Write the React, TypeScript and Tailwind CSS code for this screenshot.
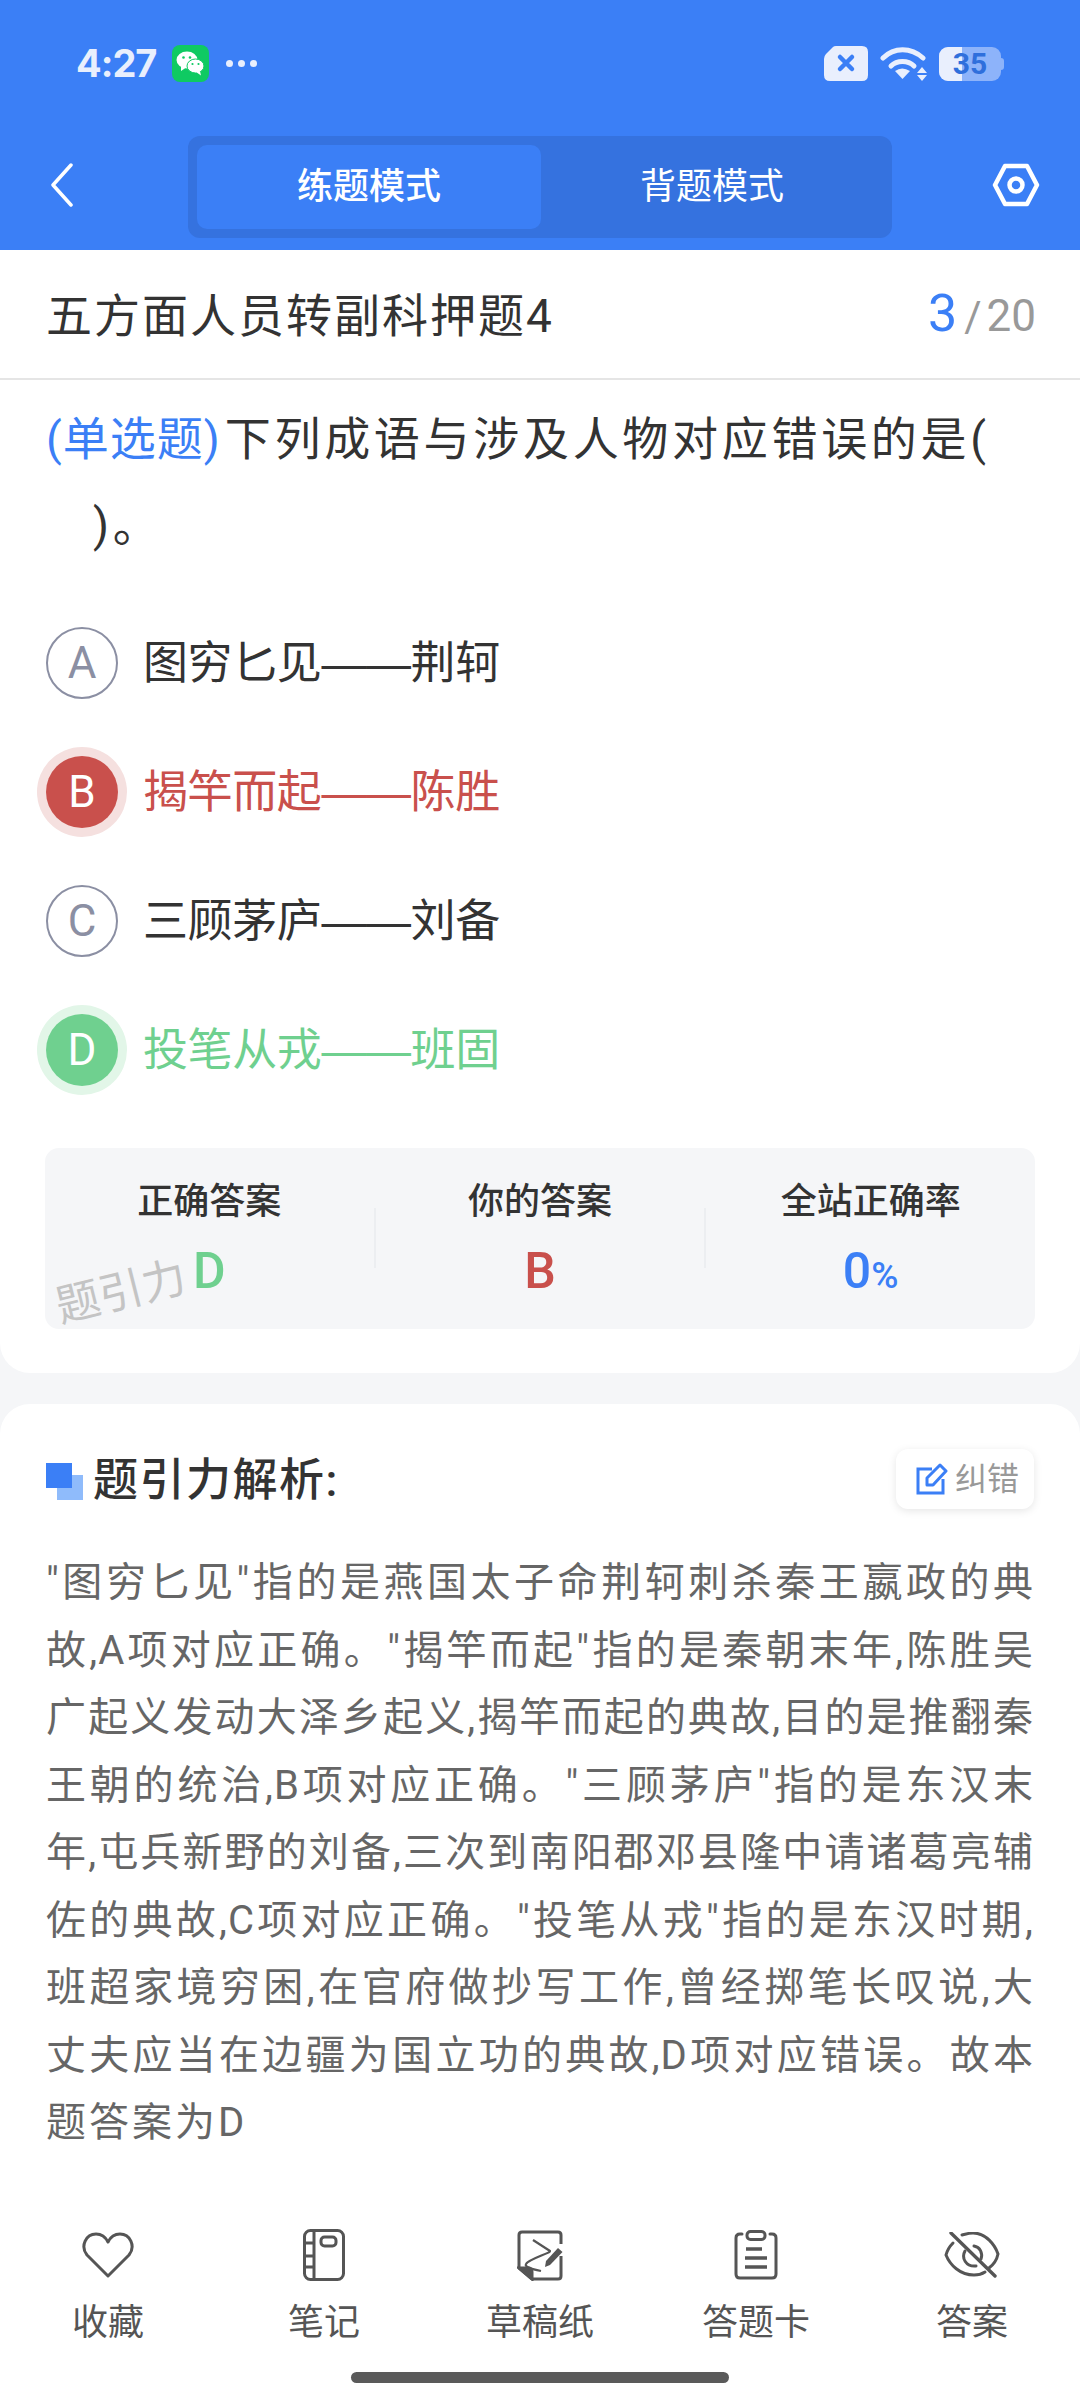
import React from "react";

const CJK = "font-['Roboto','Noto_Sans_CJK_SC',sans-serif]";

function Heart() {
  return (
    <svg width="52" height="46" viewBox="0 0 52 46" fill="none" stroke="#555" strokeWidth="3" strokeLinejoin="round">
      <path d="M26 44 L5 23 C-2 14 4 2 14 2 C20 2 24 6 26 10 C28 6 32 2 38 2 C48 2 54 14 47 23 Z" />
    </svg>
  );
}
function Notebook() {
  return (
    <svg width="42" height="52" viewBox="0 0 42 52" fill="none" stroke="#555" strokeWidth="3">
      <rect x="1.500" y="1.500" width="39" height="49" rx="6" />
      <path d="M11 2 V50" />
      <path d="M2 14 H11 M2 27 H11 M2 38 H11" />
      <rect x="18" y="8" width="15" height="9" rx="3.500" />
    </svg>
  );
}
function Draft() {
  return (
    <svg width="46" height="51" viewBox="0 0 46 51" fill="none" stroke="#555" strokeWidth="3">
      <path d="M44 14 V5 Q44 2 41 2 H5 Q2 2 2 5 V38 L15 49 H41 Q44 49 44 46 V26" strokeLinejoin="round" />
      <path d="M2 38 H11 Q15 38 15 42 V49 Z" fill="#555" />
      <path d="M16 10 L33 21 C34 23 12 29 9 34 C7 37 15 39 24 41" strokeWidth="2.200" strokeLinejoin="round" />
      <path d="M41 18 L45.500 22 L33 35 L28 37 L29 31 Z" fill="#555" stroke="none" />
    </svg>
  );
}
function Clipboard() {
  return (
    <svg width="44" height="50" viewBox="0 0 44 50" fill="none" stroke="#555" strokeWidth="3">
      <path d="M8 4 H6 Q2 4 2 8 V44 Q2 48 6 48 H38 Q42 48 42 44 V8 Q42 4 38 4 H36" strokeLinecap="round" />
      <rect x="13" y="1.500" width="18" height="8" rx="3.500" />
      <path d="M12 19 H28 M11 28 H33 M11 37 H33" strokeWidth="3.400" />
    </svg>
  );
}
function EyeOff() {
  return (
    <svg width="56" height="46" viewBox="0 0 56 46" fill="none" stroke="#555" strokeWidth="3" strokeLinecap="round">
      <path d="M9 11 C6 14 3 19 2 23 C6 33 16 43 30 43 C34 43 38 42 41 40" />
      <path d="M18 3 C22 2 25 1 29 1 C42 1 51 13 54 22 C53 27 49 33 45 36" />
      <path d="M21 19 C17 26 22 35 32 34" />
      <path d="M30 14 C36 15 39 21 37 27" />
      <path d="M7 1 L51 44" strokeWidth="3.400" />
    </svg>
  );
}

function Option({ letter, text, state }: { letter: string; text: string; state?: "wrong" | "right" }) {
  const circle =
    state === "wrong"
      ? "bg-[#c9504c] text-white border-0 shadow-[0_0_0_9px_#f5e0df]"
      : state === "right"
        ? "bg-[#6fd08f] text-white border-0 shadow-[0_0_0_9px_#e2f6e8]"
        : "border-2 border-[#8b8fa3] text-[#8b8fa3]";
  const color = state === "wrong" ? "text-[#c9504c]" : state === "right" ? "text-[#6fd08f]" : "text-[#333333]";
  return (
    <div className="flex h-[129px] items-center">
      <div className={`flex h-[72px] w-[72px] shrink-0 items-center justify-center rounded-full text-[44px] ${circle}`}>{letter}</div>
      <div className={`ml-[25px] pt-[3px] font-['Liberation_Sans','Noto_Sans_CJK_SC',sans-serif] text-[45px] tracking-[-0.4px] ${color}`}>{text}</div>
    </div>
  );
}

function Stat({ label, value, color, unit }: { label: string; value: string; color: string; unit?: string }) {
  return (
    <div className="flex flex-1 flex-col items-center pt-[32px]">
      <div className="text-[36px] font-medium leading-[44px] text-[#333333]">{label}</div>
      <div className={`mt-[21px] text-[50px] font-medium leading-[52px] ${color}`}>
        {value}
        {unit ? <span className="text-[37px]">{unit}</span> : null}
      </div>
    </div>
  );
}

function Tool({ icon, label }: { icon: React.ReactNode; label: string }) {
  return (
    <div className="flex flex-col items-center">
      <div className="flex h-[54px] items-center">{icon}</div>
      <div className="mt-[18px] text-[36px] leading-[46px] text-[#555555]">{label}</div>
    </div>
  );
}

const analysis = [
  '"图穷匕见"指的是燕国太子命荆轲刺杀秦王嬴政的典',
  '故,A项对应正确。"揭竿而起"指的是秦朝末年,陈胜吴',
  '广起义发动大泽乡起义,揭竿而起的典故,目的是推翻秦',
  '王朝的统治,B项对应正确。"三顾茅庐"指的是东汉末',
  '年,屯兵新野的刘备,三次到南阳郡邓县隆中请诸葛亮辅',
  '佐的典故,C项对应正确。"投笔从戎"指的是东汉时期,',
  '班超家境穷困,在官府做抄写工作,曾经掷笔长叹说,大',
  '丈夫应当在边疆为国立功的典故,D项对应错误。故本',
];

export default function App() {
  return (
    <div className={`relative flex h-[2400px] w-[1080px] flex-col overflow-hidden bg-[#f5f6f8] ${CJK}`}>
      <header className="h-[250px] shrink-0 bg-[#3b7ff6]">
        <div className="flex h-[125px] items-start justify-between pl-[76px] pr-[76px] pt-[42px]">
          <div className="flex items-center">
            <span className="font-['Inter',sans-serif] text-[38px] font-bold leading-[42px] tracking-[-1px] text-[#e9effd]">4:27</span>
            <div className="ml-[16px] flex h-[37px] w-[37px] items-center justify-center rounded-[8px] bg-[#0fca62]">
              <svg width="29" height="25" viewBox="0 0 29 25" fill="#ffffff">
                <ellipse cx="11" cy="9" rx="10.500" ry="8.500" />
                <path d="M5 14 L5 20 L11 16 Z" />
                <ellipse cx="19.500" cy="15" rx="8.500" ry="7" stroke="#0fca62" strokeWidth="1" />
                <path d="M24 20 L25 24.500 L20 21 Z" />
                <circle cx="7.500" cy="6.500" r="1.300" fill="#0fca62" />
                <circle cx="14" cy="6.500" r="1.300" fill="#0fca62" />
                <circle cx="16.500" cy="13" r="1.100" fill="#0fca62" />
                <circle cx="22.500" cy="13" r="1.100" fill="#0fca62" />
              </svg>
            </div>
            <div className="ml-[17px] flex gap-[5px]">
              <span className="h-[7px] w-[7px] rounded-full bg-[#e9effd]" />
              <span className="h-[7px] w-[7px] rounded-full bg-[#e9effd]" />
              <span className="h-[7px] w-[7px] rounded-full bg-[#e9effd]" />
            </div>
          </div>
          <div className="mt-[4px] flex items-center">
            <svg width="44" height="35" viewBox="0 0 44 35">
              <path d="M12 0 H38 Q44 0 44 6 V29 Q44 35 38 35 H6 Q0 35 0 29 V13 Q0 10 2 8 L9 1 Q10 0 12 0 Z" fill="#e9effd" />
              <path d="M16 11 L28 23 M28 11 L16 23" stroke="#3b7ff6" strokeWidth="4.500" strokeLinecap="round" />
            </svg>
            <svg className="ml-[12px]" width="48" height="34" viewBox="0 0 48 34" fill="none">
              <path d="M3 11 C14 0 31 0 43 11" stroke="#e9effd" strokeWidth="5" strokeLinecap="round" />
              <path d="M11 19 C17 13 28 13 34 19" stroke="#e9effd" strokeWidth="5" strokeLinecap="round" />
              <path d="M15 24 Q22 19 30 24 L22.500 32 Z" fill="#e9effd" />
              <path d="M42 20 L47 26 H37 Z M37 28 H47 L42 34 Z" fill="#e9effd" />
            </svg>
            <div className="relative ml-[11px] h-[34px] w-[62px] overflow-hidden rounded-[9px] bg-[#8db3fa]">
              <div className="h-full w-[23px] bg-[#e9effd]" />
              <span className="absolute inset-0 flex items-center justify-center font-['Roboto',sans-serif] text-[30px] font-bold leading-none text-[#2f6fdc]">35</span>
            </div>
            <div className="h-[12px] w-[3px] rounded-r-[3px] bg-[#8db3fa]" />
          </div>
        </div>
        <div className="flex h-[125px] items-start pl-[50px] pr-[40px] pt-[11px]">
          <div className="flex h-[98px] w-[26px] items-center">
            <svg width="24" height="44" viewBox="0 0 24 44" fill="none" stroke="#ffffff" strokeWidth="3.500" strokeLinecap="round" strokeLinejoin="round">
              <path d="M21 2 L3 22 L21 42" />
            </svg>
          </div>
          <div className="ml-[112px] flex h-[102px] w-[704px] rounded-[12px] bg-[#3572df] p-[9px]">
            <div className="flex h-[84px] w-[344px] items-center justify-center rounded-[10px] bg-[#3b7ff6] text-[36px] font-medium text-white">练题模式</div>
            <div className="flex h-[84px] flex-1 items-center justify-center text-[36px] text-white">背题模式</div>
          </div>
          <div className="ml-auto flex h-[98px] items-center">
            <svg width="48" height="44" viewBox="0 0 48 44" fill="none" stroke="#ffffff" strokeWidth="4.500" strokeLinejoin="round">
              <path d="M13 3 H35 L45 22 L35 41 H13 L3 22 Z" />
              <circle cx="24" cy="22" r="6.500" />
            </svg>
          </div>
        </div>
      </header>

      <section className="h-[1123px] shrink-0 rounded-b-[30px] bg-white">
        <div className="flex h-[130px] items-center justify-between border-b-2 border-[#e5e5e5] pl-[46px] pr-[44px]">
          <div className="mt-[5px] text-[46px] tracking-[2px] text-[#333333]">五方面人员转副科押题4</div>
          <div className="flex items-baseline">
            <span className="text-[52px] text-[#3b7ff6]">3</span>
            <span className="ml-[7px] text-[42px] text-[#999999]">/</span>
            <span className="ml-[5px] text-[44px] text-[#999999]">20</span>
          </div>
        </div>
        <div className="pl-[46px] pr-[30px] pt-[16px] text-[46px] leading-[86px] tracking-[3.700px] text-[#333333]">
          <div className="whitespace-nowrap">
            <span className="mr-[4px] tracking-[1px] text-[#3b7ff6]">(单选题)</span>下列成语与涉及人物对应错误的是(
          </div>
          <div className="pl-[47px]">)。</div>
        </div>
        <div className="mt-[30px] px-[46px]">
          <Option letter="A" text="图穷匕见——荆轲" />
          <Option letter="B" text="揭竿而起——陈胜" state="wrong" />
          <Option letter="C" text="三顾茅庐——刘备" />
          <Option letter="D" text="投笔从戎——班固" state="right" />
        </div>
        <div className="relative mx-[45px] mt-[34px] flex h-[181px] rounded-[14px] bg-[#f5f6f8]">
          <Stat label="正确答案" value="D" color="text-[#6fd08f]" />
          <div className="mt-[60px] h-[60px] w-[2px] bg-[#eceef1]" />
          <Stat label="你的答案" value="B" color="text-[#c9504c]" />
          <div className="mt-[60px] h-[60px] w-[2px] bg-[#eceef1]" />
          <Stat label="全站正确率" value="0" unit="%" color="text-[#3b7ff6]" />
          <div className="absolute left-[10px] top-[119px] -rotate-[14deg] text-[44px] leading-[50px] text-[#c4c4c4]">题引力</div>
        </div>
      </section>

      <section className="mt-[31px] flex-1 rounded-t-[30px] bg-white px-[46px]">
        <div className="flex h-[105px] items-end justify-between">
          <div className="mb-[-2px] flex items-center">
            <div className="relative h-[37px] w-[37px]">
              <div className="absolute bottom-0 right-0 h-[25px] w-[26px] bg-[#8fbbfb]" />
              <div className="absolute left-0 top-0 h-[25px] w-[26px] bg-[#3b7ff6]" />
            </div>
            <div className="ml-[10px] text-[45px] font-medium leading-[60px] tracking-[1.500px] text-[#333333]">题引力解析:</div>
          </div>
          <div className="flex h-[60px] w-[138px] items-center rounded-[12px] bg-white pl-[20px] shadow-[0_2px_8px_rgba(0,0,0,0.1)]">
            <svg width="32" height="32" viewBox="0 0 32 32" fill="none" stroke="#3b7ff6" strokeWidth="3">
              <path d="M16 6 H2 V30 H27 V16" />
              <path d="M11 22 V15 L24 2 L30 8 L17 22 Z" strokeLinejoin="round" />
            </svg>
            <span className="ml-[7px] text-[32px] text-[#999999]">纠错</span>
          </div>
        </div>
        <div className="mt-[40px] text-[40px] leading-[67.500px] tracking-[1px] text-[#666666]">
          {analysis.map((line) => (
            <div key={line} className="text-justify [text-align-last:justify]">{line}</div>
          ))}
          <div className="tracking-[3px]">题答案为D</div>
        </div>
      </section>

      <nav className="absolute bottom-0 left-0 right-0 h-[200px] bg-white">
        <div className="grid grid-cols-5 pt-[28px]">
          <Tool icon={<Heart />} label="收藏" />
          <Tool icon={<Notebook />} label="笔记" />
          <Tool icon={<Draft />} label="草稿纸" />
          <Tool icon={<Clipboard />} label="答题卡" />
          <Tool icon={<EyeOff />} label="答案" />
        </div>
        <div className="absolute bottom-[17px] left-[351px] h-[11px] w-[378px] rounded-full bg-[#5a5a5a]" />
      </nav>
    </div>
  );
}
